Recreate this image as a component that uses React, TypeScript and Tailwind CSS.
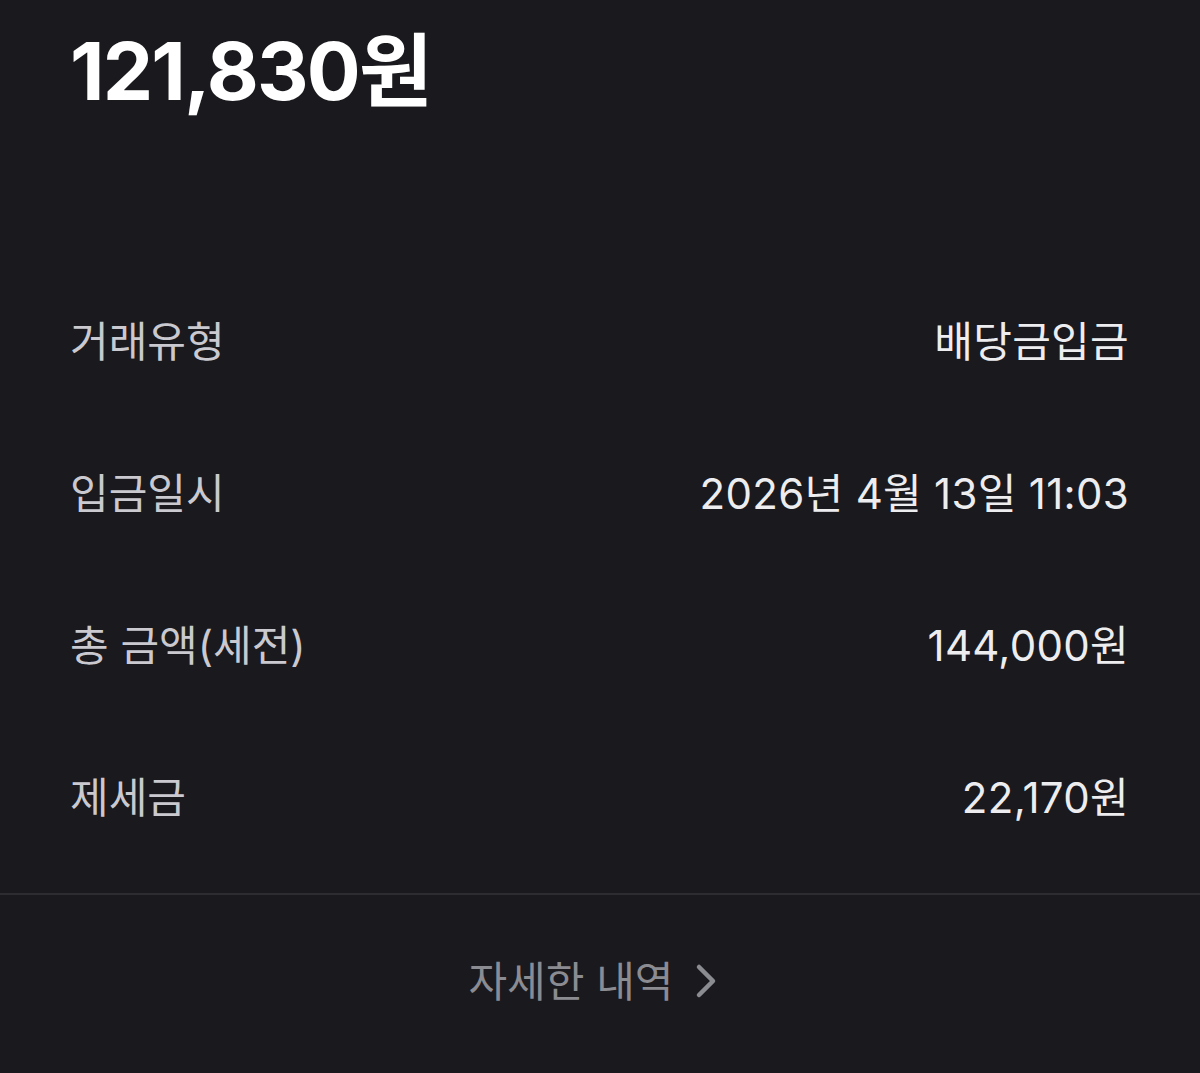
const rows = [
  { label: "거래유형", value: "배당금입금" },
  { label: "입금일시", value: "2026년 4월 13일 11:03" },
  { label: "총 금액(세전)", value: "144,000원" },
  { label: "제세금", value: "22,170원" },
];

export default function App() {
  return (
    <div
      className="min-h-[1073px] w-full bg-[#19191e] text-white"
      style={{ fontFamily: "Inter, 'Noto Sans CJK KR', sans-serif" }}
    >
      <div className="px-[70px] pt-[31px] h-[265px]">
        <p className="text-[80px] font-bold leading-none tracking-[-1.8px] text-white">
          121,830원
        </p>
      </div>

      <div className="pl-[70px] pr-[71px]">
        {rows.map((row) => (
          <div
            key={row.label}
            className="flex h-[152px] items-center justify-between text-[42px]"
          >
            <span className="text-[#c9c9cf]">{row.label}</span>
            <span className="text-[#ededf0] tracking-[0.3px]">{row.value}</span>
          </div>
        ))}
      </div>

      <div className="mt-[20px] h-[2px] bg-[#2c2c31]" />

      <button className="flex h-[172px] w-full items-center justify-center gap-[20px] pr-[14px] text-[42px] text-[#8b8b92]">
        <span>자세한 내역</span>
        <svg
          width="24"
          height="36"
          viewBox="0 0 24 36"
          fill="none"
          stroke="#8b8b92"
          strokeWidth="4.5"
          strokeLinecap="round"
          strokeLinejoin="round"
        >
          <path d="M5 4 L19 18 L5 32" />
        </svg>
      </button>
    </div>
  );
}
